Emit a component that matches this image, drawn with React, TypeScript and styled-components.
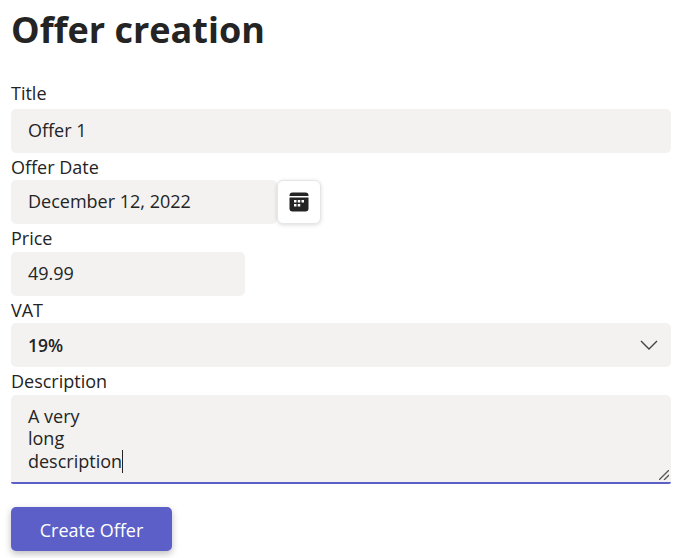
import React from "react";
import styled, { createGlobalStyle } from "styled-components";

const Global = createGlobalStyle`
  html, body { margin: 0; padding: 0; background: #fff; overflow: hidden; }
  body { font-family: "Open Sans", "Noto Sans", sans-serif; color: #242424; }
`;

const Page = styled.div`
  width: 682px;
  height: 558px;
  box-sizing: border-box;
  padding: 6px 11px 0;
  display: flex;
  flex-direction: column;
`;

const Heading = styled.h1`
  margin: 0 0 27.4px;
  font-size: 36px;
  line-height: 48px;
  font-weight: 700;
  color: #242424;
`;

const Label = styled.label<{ $first?: boolean }>`
  display: block;
  flex: none;
  box-sizing: border-box;
  font-size: 18px;
  line-height: 24px;
  height: 27.5px;
  padding-top: ${(p) => (p.$first ? "0" : "2px")};
  color: #242424;
`;

const Field = styled.div<{ $width?: number }>`
  flex: none;
  box-sizing: border-box;
  height: 44px;
  width: ${(p) => (p.$width ? `${p.$width}px` : "100%")};
  background: #f3f2f1;
  border-radius: 5px;
  padding: 0 17px 2px;
  display: flex;
  align-items: center;
  font-size: 18px;
  color: #242424;
`;

const DateRow = styled.div`
  display: flex;
  flex: none;
  align-items: center;
`;

const IconButton = styled.button`
  width: 44px;
  height: 44px;
  box-sizing: border-box;
  border: 1px solid #e6e6e6;
  border-radius: 6px;
  background: #fff;
  box-shadow: 0 1px 4px rgba(0, 0, 0, 0.14);
  display: flex;
  align-items: center;
  justify-content: center;
  padding: 0;
`;

const SelectField = styled(Field)`
  justify-content: space-between;
  font-size: 17.5px;
  font-weight: 600;
  padding: 0 12px 0 17px;
`;

const TextArea = styled.div`
  position: relative;
  flex: none;
  box-sizing: border-box;
  height: 89px;
  background: #f3f2f1;
  border-radius: 5px 5px 2px 2px;
  border-bottom: 2px solid #5b5fc7;
  padding: 10px 17px 0;
  font-size: 18px;
  line-height: 22.4px;
  color: #242424;
`;

const Caret = styled.span`
  display: inline-block;
  width: 1px;
  height: 23px;
  background: #242424;
  vertical-align: -5px;
`;

const Grip = styled.svg`
  position: absolute;
  right: 2px;
  bottom: 2px;
`;

const Submit = styled.button`
  flex: none;
  margin-top: 23px;
  width: 161px;
  height: 44px;
  border: none;
  border-radius: 5px;
  background: #5b5fc7;
  color: #fff;
  font-family: inherit;
  font-size: 18px;
  font-weight: 500;
  padding: 2px 0 0;
  box-shadow: 0 3px 7px rgba(0, 0, 0, 0.25);
`;

export default function App() {
  return (
    <Page>
      <Global />
      <Heading>Offer creation</Heading>
      <Label $first>Title</Label>
      <Field>Offer 1</Field>
      <Label>Offer Date</Label>
      <DateRow>
        <Field $width={266}>December 12, 2022</Field>
        <IconButton aria-label="Open calendar">
          <svg width="20" height="20" viewBox="0 0 20 20">
            <path fill="#242424" fillRule="evenodd" d="M3.500.5h13a3 3 0 0 1 3 3V4H.5v-.5a3 3 0 0 1 3-3ZM.5 5.500h19v11a3 3 0 0 1-3 3h-13a3 3 0 0 1-3-3ZM5 8h2.500v2.500H5Zm3.750 0h2.500v2.500h-2.500Zm3.750 0H15v2.500h-2.500ZM5 12h2.500v2.500H5Zm3.750 0h2.500v2.500h-2.500Z" />
          </svg>
        </IconButton>
      </DateRow>
      <Label>Price</Label>
      <Field $width={234}>49.99</Field>
      <Label>VAT</Label>
      <SelectField>
        19%
        <svg width="20" height="20" viewBox="0 0 20 20" fill="none">
          <path d="M2 6 10 14 18 6" stroke="#424242" strokeWidth="1.400" />
        </svg>
      </SelectField>
      <Label>Description</Label>
      <TextArea>
        A very
        <br />
        long
        <br />
        description<Caret />
        <Grip width="10" height="10" viewBox="0 0 10 10" fill="none">
          <path d="M0 10 10 0M5 10l5-5" stroke="#555" strokeWidth="1.300" />
        </Grip>
      </TextArea>
      <Submit>Create Offer</Submit>
    </Page>
  );
}
